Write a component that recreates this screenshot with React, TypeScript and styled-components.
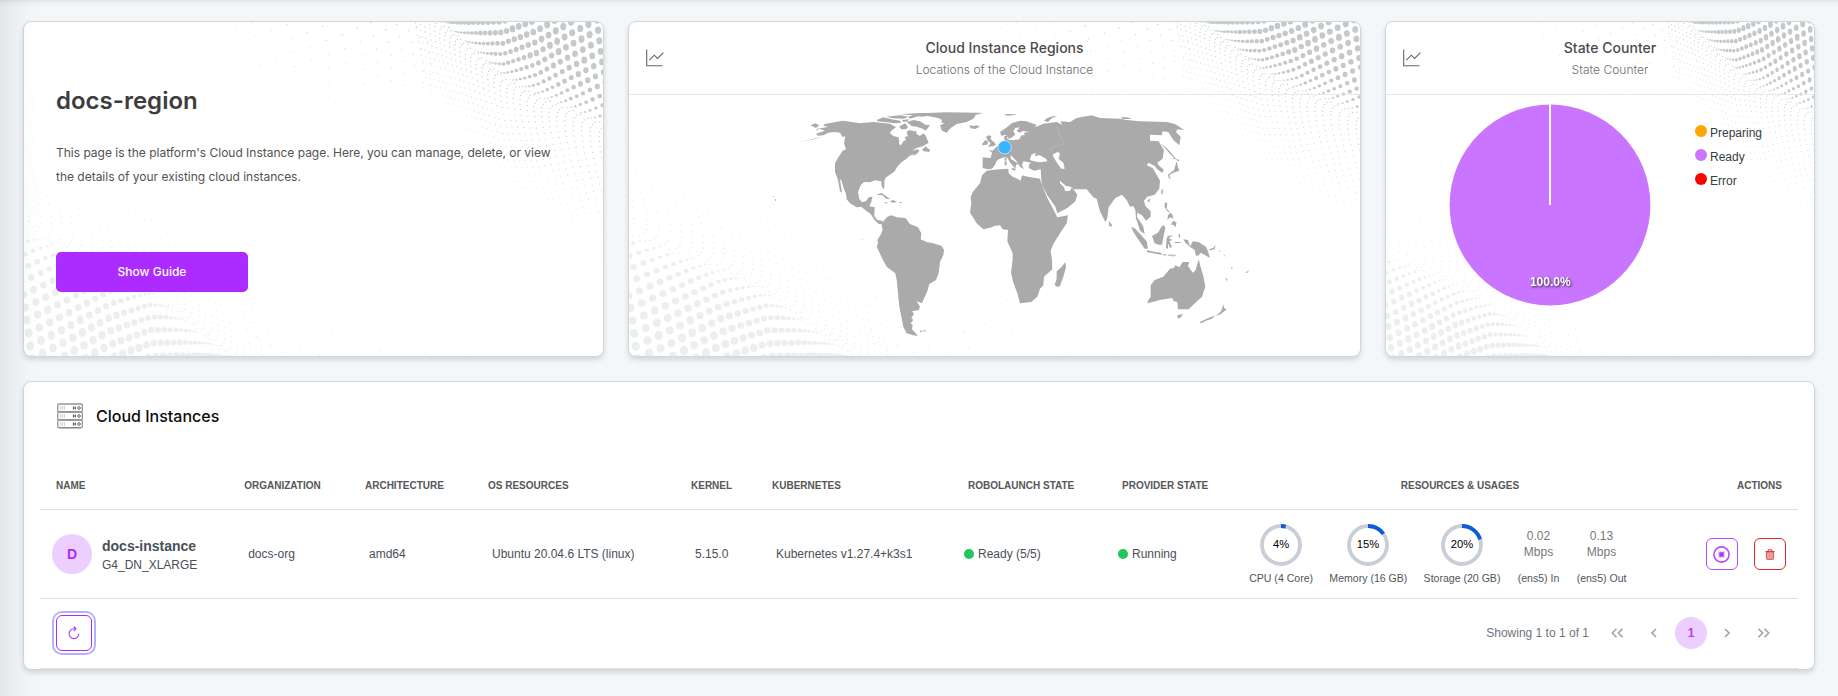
import React from "react";
import styled, { createGlobalStyle, css } from "styled-components";

const GlobalStyle = createGlobalStyle`
  * { box-sizing: border-box; }
  body { margin: 0; background: #f3f7fa; font-family: "Liberation Sans", Arial, sans-serif; }
`;

const inter = css`font-family: Inter, "Liberation Sans", sans-serif;`;
const ACCENT = "#ac2cff";

/* ---------- page shell ---------- */

const Page = styled.main`
  position: relative;
  width: 1838px;
  height: 696px;
  overflow: hidden;
  padding: 21px 23px 26px;
  display: flex;
  flex-direction: column;
  gap: 24px;
`;

const EdgeShade = styled.div`
  position: absolute;
  inset: 0;
  pointer-events: none;
  background:
    linear-gradient(to bottom, rgba(40, 50, 55, 0.1), rgba(40, 50, 55, 0.03) 3px, transparent 7px),
    linear-gradient(to right, rgba(40, 50, 55, 0.085), rgba(40, 50, 55, 0.045) 13px, rgba(40, 50, 55, 0.012) 27px, transparent 40px);
`;

const TopRow = styled.div`
  display: grid;
  grid-template-columns: 581px 733px 430px;
  gap: 24px;
  height: 336px;
`;

const Card = styled.section`
  position: relative;
  display: flex;
  flex-direction: column;
  background: #fff;
  border: 1px solid #d3d5d6;
  border-radius: 8px;
  box-shadow: 0 3px 5px rgba(0, 0, 0, 0.13);
`;

/* ---------- halftone wave backdrop ---------- */

const Backdrop = styled.svg`
  position: absolute;
  inset: 0;
  width: 100%;
  height: 100%;
  border-radius: 7px;
  pointer-events: none;
`;

const foldPoints: [number, number][] = [
  [-900, -1150], [-100, -350], [100, -130], [250, 0], [330, 69], [430, 160], [530, 219], [630, 259], [730, 304], [800, 335], [900, 375],
];

function foldY(x: number) {
  for (let i = 1; i < foldPoints.length; i++) {
    const [x0, y0] = foldPoints[i - 1];
    const [x1, y1] = foldPoints[i];
    if (x <= x1) return y0 + ((y1 - y0) * (x - x0)) / (x1 - x0);
  }
  return 375;
}

const WAVE_LEVELS = 8;

/* Dots are grouped in paths by opacity; units are a third of a pixel. */
function buildWave(): string[] {
  const paths: string[] = Array.from({ length: WAVE_LEVELS }, () => "");
  const dot = (px: number, y: number, rx: number, ry: number, a: number) => {
    if (y < -12 || y > 780 || px > 742 || a <= 0.04) return;
    const level = Math.min(WAVE_LEVELS - 1, Math.floor(a * WAVE_LEVELS));
    const r = `${rx.toFixed(1)} ${ry.toFixed(1)}`;
    const w = (2 * rx).toFixed(1);
    paths[level] += `M${(px - rx).toFixed(1)} ${y.toFixed(1)}a${r} 0 1 0 ${w} 0a${r} 0 1 0 -${w} 0`;
  };

  // crest and near slope, down to the point where the dots fade out
  for (let x = 800; x > 120; x -= x > 250 ? 15 + (13 * (x - 250)) / 480 : 15) {
    const shift = (0.9 * (x - 250)) / 31;
    for (let j = -60; j < 60; j++) {
      const m = j + shift;
      if (m > 18) continue;
      if (m > 0) {
        const g = 31 * m - 78 * (1 - Math.exp(-m / 3));
        const px = x + 65 * Math.exp(-m / 3) - 0.1 * g;
        const rx = 2.2 + 7.6 * (1 - Math.exp(-m / 4.6));
        dot(px, foldY(px) - g, rx, rx * (0.6 + 0.65 * (1 - Math.exp(-m / 4))), m < 1.5 ? 0.75 : 1);
      } else {
        const g = 18 * m + 52 * (1 - Math.exp(m / 4));
        const px = x + 65 - 5 * m - 70 * (1 - Math.exp(m / 3));
        const limit = 290 + (px - 250) * 0.3;
        dot(px, foldY(px) - g, 2.1, 1.9, 1.05 * (1 + g / limit));
      }
    }
  }

  // far slope: sparse specks spreading to the left
  let step = 18;
  let col = 0;
  for (let x = 190; x > -520; x -= step) {
    step = Math.min(52, step + 4.5);
    col += 1;
    for (let y = ((col * 17) % 40) - 20; y < 320; y += 24 + step * 0.35) {
      const drift = Math.sin(y / 60) * 8 + y * 0.12;
      const a = 0.95 * (1 - y / 330) * Math.min(1, 1 + (x + 100) / 430);
      dot(x + drift, y, 2, 2, a);
    }
  }
  return paths;
}

const wave = buildWave();

const Wave = ({ color }: { color: string }) => (
  <g fill={color}>
    {wave.map((d, i) => (
      <path key={i} d={d} opacity={(i + 1) / WAVE_LEVELS} />
    ))}
  </g>
);

interface WaveProps { w: number; top: [number, number]; bottom: [number, number] }

const WaveBackdrop = ({ w, top, bottom }: WaveProps) => (
  <Backdrop viewBox={`0 0 ${w} 334`}>
    <g transform={`translate(${w} 0) scale(${top[0] / 3} ${top[1] / 3}) translate(-730 0)`}>
      <Wave color="#c6c9c9" />
    </g>
    <g transform={`translate(0 334) scale(${-bottom[0] / 3} ${-bottom[1] / 3}) translate(-730 0)`}>
      <Wave color="#edefef" />
    </g>
  </Backdrop>
);

/* ---------- intro card ---------- */

const Intro = styled.div`
  ${inter}
  position: relative;
  padding: 63px 32px 0;
  display: flex;
  flex-direction: column;
  align-items: flex-start;
`;

const RegionName = styled.h1`
  margin: 0;
  font-size: 24px;
  line-height: 32px;
  font-weight: 600;
  color: #3d3d3d;
`;

const IntroText = styled.p`
  margin: 24px 0 63px;
  width: 500px;
  font-size: 12px;
  line-height: 24px;
  letter-spacing: -0.012px;
  color: #525252;
`;

const GuideButton = styled.button`
  ${inter}
  width: 192px;
  height: 40px;
  padding: 0 0 2px;
  border: 0;
  border-radius: 5px;
  background: ${ACCENT};
  color: #fff;
  font-size: 12px;
  font-weight: 500;
`;

/* ---------- chart cards ---------- */

const ChartHeader = styled.header`
  position: relative;
  display: flex;
  align-items: center;
  height: 73px;
  padding: 0 15px 0 17px;
  border-bottom: 1px solid #e7e8e9;
`;

const ChartTitles = styled.div`
  ${inter}
  flex: 1;
  text-align: center;
  padding-top: 1px;
`;

const ChartTitle = styled.div`
  font-size: 14px;
  line-height: 22px;
  font-weight: 500;
  letter-spacing: 0.02px;
  color: #4b4b4b;
`;

const ChartSubtitle = styled.div`
  font-size: 12px;
  line-height: 21px;
  font-weight: 300;
  letter-spacing: 0.03px;
  color: #6c6c6c;
`;

const ChartBody = styled.div`
  position: relative;
  flex: 1;
  display: flex;
`;

const ChartIcon = () => (
  <svg width="18" height="18" viewBox="0 0 18 18" fill="none" stroke="#666" strokeWidth="1.1">
    <path d="M0.7 0.5V16.7H16.5" />
    <path d="M3.3 11.2L8.3 6.2L11.6 9.4L17.4 3.7" />
  </svg>
);

const MapSvg = styled.svg`
  width: 100%;
  height: 100%;
`;

const westLand = [
  "M168 101L195 92 178 86 168 92 172 86 186 84 205 80 190 77 194 72 215 68 248 62 275 66 300 70 340 66 390 71 408 82 392 94 390 100 400 108 415 112 418 122 417 133 423 136 430 124 438 120 434 112 443 108 440 96 448 90 462 94 468 92 470 102 480 108 490 100 496 106 500 114 506 128 490 138 470 144 456 152 474 148 478 153 470 162 458 168 462 162 448 168 440 176 425 186 412 200 404 214 390 224 378 232 373 242 373 262 370 268 365 258 364 244 345 241 330 247 312 246 302 256 294 276 298 298 306 306 318 304 326 292 338 290 335 300 334 306 328 319 344 322 343 348 352 360 366 362 368 366 382 350 395 346 410 352 436 354 450 372 474 382 484 400 482 418 500 426 520 430 545 438 552 450 550 466 540 486 536 520 528 540 508 552 502 574 490 600 486 610 470 604 480 620 476 630 456 634 462 642 454 654 460 660 452 670 458 676 456 688 474 708 460 706 440 700 430 680 424 650 418 620 414 580 410 540 406 520 380 500 366 474 350 440 354 430 352 420 362 404 368 390 364 372 356 372 344 360 332 342 318 332 304 320 290 322 270 310 260 298 258 282 250 262 244 240 240 238 246 278 240 274 234 240 225 216 225 190 236 170 248 152 258 148 252 130 256 108 248 112 240 98 224 96 205 98 190 106 174 107Z",
  "M440 66L460 60 480 64 496 74 510 76 504 84 496 92 488 86 470 80 455 78Z",
  "M350 60L370 52 395 58 420 62 424 68 405 70 380 67 352 64Z",
  "M424 76L436 70 444 82 438 88 424 88 418 80Z",
  "M378 50L420 46 445 50 430 56 400 55Z",
  "M420 43L480 39 545 40 510 45 490 50 474 49 450 56 444 50 460 46Z",
  "M426 60L446 58 444 64 430 66Z",
  "M480 40L560 37 648 38 670 39 648 44 640 56 620 66 590 72 572 84 560 98 546 92 540 76 554 70 544 68 546 60 535 54 515 50 490 46Z",
  "M628 76L640 78 650 76 660 80 645 87 632 85Z",
  "M486 150L498 138 504 146 510 148 508 156 492 154Z",
  "M152 76L166 70 178 76 168 84Z",
  "M122 126L155 118 193 109 165 117 140 122Z",
  "M348 284L365 279 378 288 391 298 378 296 368 286Z",
  "M390 304L400 300 412 306 396 308Z",
  "M419 306h6v3h-6Z", "M374 307h8v3h-8Z",
  "M480 692h6v4h-6Z", "M489 691h8v3h-8Z", "M44 296L50 300 46 303Z", "M39 289h3v2h-3Z",
  "M306 417h2v2h-2Z",
];

const eastLand = [
  "M68 172L92 174 96 158 86 150 98 152 108 142 120 132 134 122 132 110 140 106 142 116 148 120 160 121 178 118 184 106 194 106 192 98 208 96 190 93 178 98 170 92 180 82 166 84 160 94 166 104 154 113 146 116 138 104 124 107 120 96 138 84 155 70 180 62 200 64 215 70 230 74 224 82 240 76 250 71 290 66 306 74 302 64 330 66 350 54 395 46 420 54 480 56 500 60 540 64 620 66 645 72 660 82 672 90 652 88 648 96 662 110 658 136 640 120 625 96 608 94 605 106 570 104 570 122 596 124 602 134 612 150 608 176 592 188 596 196 612 210 606 218 592 208 584 198 566 188 560 196 578 204 590 224 600 242 598 266 584 284 562 290 552 302 556 318 572 334 572 350 558 362 546 346 532 338 531 352 544 370 550 380 554 402 540 392 532 366 528 356 526 330 520 318 510 320 500 300 486 284 466 294 446 322 442 354 436 366 420 334 410 296 400 292 394 284 380 268 340 268 332 260 318 258 300 242 300 250 312 262 316 274 330 272 336 262 352 284 346 304 322 324 292 340 286 320 262 286 246 256 244 238 242 208 222 212 206 204 208 192 214 188 190 184 186 196 192 208 180 200 170 184 152 165 152 176 176 192 168 194 166 206 152 190 142 173 130 172 112 180 104 196 96 206 84 208 68 204ZM210 180L214 164 228 158 224 168 240 166 258 176 262 184 240 187 222 184ZM278 164L292 156 300 160 296 176 310 188 314 206 304 206 292 190 282 174Z",
  "M80 212L96 210 120 208 145 206 146 220 158 230 172 236 182 242 186 226 204 230 240 236 246 256 262 294 280 328 292 352 324 346 320 370 300 400 280 432 272 452 276 480 277 508 252 530 250 556 240 566 232 590 214 606 180 610 172 580 160 548 153 518 158 480 158 460 142 424 144 390 128 388 120 376 102 378 96 382 70 388 50 370 38 350 30 338 34 310 32 290 40 274 60 250 66 226Z",
  "M316 486L318 502 310 530 300 558 292 561 284 554 290 536 290 514 304 502Z",
  "M84 106L94 108 92 117 104 128 108 134 100 139 84 140 92 130 84 122 78 112Z",
  "M66 132L76 120 84 124 82 134 68 136Z",
  "M132 42L172 43 160 46 142 47Z",
  "M252 62L262 54 278 49 292 49 276 54 264 66Z",
  "M134 174h5v8h-5Z", "M134 184h6v12h-6Z", "M156 204L168 206 164 212 154 208Z",
  "M482 52h20l14 5h-28Z",
  "M660 180L654 184 648 178 638 176 640 172 650 178ZM650 184L654 200 658 212 646 216 632 222 628 228 632 236 626 234 624 224 642 210Z",
  "M600 128L622 146 634 160 650 178 632 164 618 148Z",
  "M604 270L609 268 608 284 604 280Z",
  "M562 300L572 296 566 308Z",
  "M614 308L622 308 620 326 632 338 622 334 614 322Z",
  "M624 346L632 338 638 346 640 356 630 352 622 360Z",
  "M632 374L640 362 650 368 646 382 640 374Z",
  "M446 362L456 374 454 380 448 378Z",
  "M514 380L526 386 546 408 560 424 564 446 554 446 536 420 520 396Z",
  "M560 450L584 456 604 458 604 464 580 460 562 457Z",
  "M608 463h12v3h-12Z", "M624 464h20v3h-20Z", "M632 470L650 464 646 468Z",
  "M576 408L594 398 606 378 612 376 616 384 612 402 606 434 596 434 584 430Z",
  "M620 414L624 408 640 406 626 414 636 420 628 424 636 440 630 444 624 430 624 446 618 444Z",
  "M656 402L660 402 660 414 656 412Z", "M644 426h18v3h-18Z",
  "M670 418L684 420 688 434 692 438 698 424 715 426 738 440 744 454 750 474 736 466 722 458 716 466 708 468 704 450 690 440 676 428Z",
  "M746 448L760 444 767 434 764 448 750 451Z",
  "M774 448L784 456 778 454Z", "M788 460L802 474 792 466Z", "M814 500h3v6h-3Z", "M796 532L803 540 799 542Z", "M855 519L868 510 862 518Z",
  "M716 478L722 502 730 528 736 560 726 590 700 614 686 628 654 628 652 606 642 604 636 594 600 600 562 610 564 602 572 590 572 556 584 540 610 530 630 506 642 504 646 496 658 502 668 486 688 486 684 498 698 518 706 512Z",
  "M652 646L670 642 662 652 654 656Z",
  "M790 612L792 624 800 628 790 636 778 644 768 648 784 632Z",
  "M766 646L756 656 738 662 724 670 718 667 740 656Z",
];

const WorldMap = () => (
  <MapSvg viewBox="0 0 731 261">
    <g fill="#aaaaaa" fillRule="evenodd" transform="translate(131 5) scale(0.33333)">
      {westLand.map((d) => <path key={d} d={d} />)}
      <g transform="translate(600 0)">
        {eastLand.map((d) => <path key={d} d={d} />)}
        <path d="M290 76L300 104 311 132 292 138 272 146 274 156" fill="none" stroke="#c2c2c2" strokeWidth="1.5" />
        <circle cx="134" cy="142" r="20" fill="#38b6ff" stroke="#c8e6f7" strokeWidth="2.5" />
      </g>
    </g>
  </MapSvg>
);

const PieSvg = styled.svg`
  margin: 9px 0 0 63px;
  flex: none;
`;

const PieLabel = styled.text`
  font: bold 12px "Liberation Sans", Arial, sans-serif;
  fill: #fff;
  text-anchor: middle;
  filter: drop-shadow(1px 1px 1px rgba(0, 0, 0, 0.7));
`;

const Pie = () => (
  <PieSvg width="202" height="202" viewBox="0 0 202 202">
    <circle cx="101" cy="101" r="100.4" fill="#c975ff" />
    <path d="M101 0V101" stroke="#fff" strokeWidth="2" />
    <PieLabel x="101.3" y="182">100.0%</PieLabel>
  </PieSvg>
);

const Legend = styled.ul`
  list-style: none;
  margin: 24px 0 0 44px;
  padding: 0;
  color: #373d3f;
  font-size: 12px;
`;

const LegendItem = styled.li<{ $color: string }>`
  display: flex;
  align-items: center;
  gap: 3px;
  height: 24px;
  line-height: 20px;
  padding-top: 4px;
  &::before {
    content: "";
    width: 12px;
    height: 12px;
    margin-top: -4px;
    border-radius: 50%;
    background: ${(p) => p.$color};
  }
`;

/* ---------- instances table ---------- */

const TableCard = styled(Card)`
  height: 289px;
  padding: 0 16px;
`;

const TableTitle = styled.div`
  ${inter}
  display: flex;
  align-items: center;
  gap: 13px;
  height: 69px;
  padding-left: 17px;
  font-size: 16px;
  font-weight: 500;
  line-height: 20px;
  color: #0d0d0d;
`;

const TitleText = styled.span`padding-bottom: 2px;`;

const ServerIcon = () => (
  <svg width="26" height="27" viewBox="0 0 26 27" fill="none">
    {[0, 8, 16].map((y) => (
      <g key={y} transform={`translate(0 ${y})`}>
        <rect x="0.7" y="1" width="24.6" height="7.6" rx="1" stroke="#959595" strokeWidth="1.3" />
        <path d="M2 8.9H24" stroke="#808080" strokeWidth="0.9" />
        <path d="M3.3 3V7M5.3 3V7M7.3 3V7" stroke="#c6c6c6" strokeWidth="0.9" />
        <path d="M16.4 3.6V6.4M18.4 3.6V6.4M16 5H19" stroke="#666" strokeWidth="1.1" />
        <circle cx="22" cy="5" r="1.3" stroke="#666" strokeWidth="1" />
      </g>
    ))}
  </svg>
);

const GridRow = styled.div`
  display: grid;
  grid-template-columns: 188.2px 120.8px 123px 203px 81px 196px 154px 118px 472px 102px;
  align-items: center;
  border-bottom: 1px solid #dcdfe3;
`;

const HeadRow = styled(GridRow)`
  height: 59px;
  padding-top: 12px;
`;

const HeadCell = styled.div<{ $align?: string }>`
  padding: 0 16px;
  font-size: 10px;
  font-weight: bold;
  line-height: 16px;
  color: #575757;
  white-space: nowrap;
  text-align: ${(p) => p.$align ?? "left"};
`;

const BodyRow = styled(GridRow)`height: 89px;`;

const Cell = styled.div`
  padding-left: 20px;
  font-size: 12px;
  color: #495057;
  white-space: nowrap;
`;

const NameCell = styled.div`
  display: flex;
  align-items: center;
  gap: 10px;
  padding-left: 12px;
  color: #495057;
`;

const Avatar = styled.div`
  width: 40px;
  height: 40px;
  border-radius: 50%;
  display: grid;
  place-items: center;
  background: #eccfff;
  color: ${ACCENT};
  font-size: 14px;
  font-weight: bold;
`;

const InstanceName = styled.div`
  padding-top: 4px;
  font-size: 14px;
  font-weight: bold;
  line-height: 18px;
`;

const InstanceType = styled.div`
  font-size: 12px;
  line-height: 21px;
`;

const StateCell = styled.div`
  display: flex;
  align-items: center;
  gap: 4px;
  padding-left: 12px;
  font-size: 12px;
  color: #495057;
  &::before {
    content: "";
    width: 10px;
    height: 10px;
    border-radius: 50%;
    background: #22c55e;
  }
`;

const Usages = styled.div`
  display: flex;
  gap: 16.3px;
  padding-left: 25.2px;
`;

const Usage = styled.div`
  display: flex;
  flex-direction: column;
  align-items: center;
  gap: 6px;
  color: #4f555b;
  font-size: 10.56px;
  line-height: 13px;
  white-space: nowrap;
`;

const RateUsage = styled(Usage)`
  padding-left: 1px;
`;

const Rate = styled.div`
  height: 42px;
  width: 40px;
  padding-top: 4px;
  text-align: center;
  white-space: normal;
  font-size: 12px;
  line-height: 16px;
  color: #777;
`;

const GaugeText = styled.text`
  font: 11.2px "Liberation Sans", Arial, sans-serif;
  fill: #000;
  text-anchor: middle;
`;

const Gauge = ({ value }: { value: number }) => {
  const c = 2 * Math.PI * 19;
  return (
    <svg width="42" height="42" viewBox="0 0 42 42" fill="none">
      <circle cx="21" cy="21" r="19" stroke="#c9ced6" strokeWidth="3.8" />
      <circle cx="21" cy="21" r="19" stroke="#0b5cdb" strokeWidth="3.8" strokeDasharray={`${(c * value) / 100} ${c}`} transform="rotate(-90 21 21)" />
      <GaugeText x="21" y="24.4">{value}%</GaugeText>
    </svg>
  );
};

const Actions = styled.div`
  display: flex;
  gap: 16px;
  padding-left: 10px;
`;

const IconButton = styled.button<{ $color: string }>`
  width: 32px;
  height: 32px;
  padding: 0;
  display: grid;
  place-items: center;
  background: #fff;
  border: 1px solid ${(p) => p.$color};
  border-radius: 6px;
`;

const RefreshButton = styled(IconButton)`
  width: 36px;
  height: 36px;
  box-shadow: 0 0 0 2px #fff, 0 0 0 4px #b0b2fb;
`;

const Footer = styled.div`
  display: flex;
  align-items: center;
  justify-content: space-between;
  height: 70px;
  padding: 0 18px 2px 16px;
  border-bottom: 1px solid #e3e5e8;
`;

const Pager = styled.nav`
  display: flex;
  align-items: center;
  font-size: 12px;
  color: #6c757d;
`;

const PageStep = styled.span<{ $w: number }>`
  display: grid;
  place-items: center;
  width: ${(p) => p.$w}px;
`;

const PageNumber = styled.span`
  width: 32px;
  height: 32px;
  margin-left: 12px;
  border-radius: 50%;
  display: grid;
  place-items: center;
  background: #eccfff;
  color: #b23cff;
  font-weight: bold;
`;

const Chevron = ({ paths, w = 6 }: { paths: string; w?: number }) => (
  <svg width={w} height="10" viewBox={`0 0 ${w} 10`} fill="none" stroke="#9fa5ab" strokeWidth="1.6">
    <path d={paths} />
  </svg>
);

const usages = [
  { label: "CPU (4 Core)", value: 4 },
  { label: "Memory (16 GB)", value: 15 },
  { label: "Storage (20 GB)", value: 20 },
];

const rates = [
  { label: "(ens5) In", value: "0.02 Mbps" },
  { label: "(ens5) Out", value: "0.13 Mbps" },
];

const heads = ["NAME", "ORGANIZATION", "ARCHITECTURE", "OS RESOURCES", "KERNEL", "KUBERNETES", "ROBOLAUNCH STATE", "PROVIDER STATE"];

const InstancesTable = () => (
  <TableCard>
    <TableTitle><ServerIcon /><TitleText>Cloud Instances</TitleText></TableTitle>
    <HeadRow>
      {heads.map((h) => <HeadCell key={h}>{h}</HeadCell>)}
      <HeadCell $align="center">RESOURCES &amp; USAGES</HeadCell>
      <HeadCell $align="right">ACTIONS</HeadCell>
    </HeadRow>
    <BodyRow>
      <NameCell>
        <Avatar>D</Avatar>
        <div>
          <InstanceName>docs-instance</InstanceName>
          <InstanceType>G4_DN_XLARGE</InstanceType>
        </div>
      </NameCell>
      <Cell>docs-org</Cell>
      <Cell>amd64</Cell>
      <Cell>Ubuntu 20.04.6 LTS (linux)</Cell>
      <Cell>5.15.0</Cell>
      <Cell>Kubernetes v1.27.4+k3s1</Cell>
      <StateCell>Ready (5/5)</StateCell>
      <StateCell>Running</StateCell>
      <Usages>
        {usages.map((u) => <Usage key={u.label}><Gauge value={u.value} />{u.label}</Usage>)}
        {rates.map((r) => <RateUsage key={r.label}><Rate>{r.value}</Rate>{r.label}</RateUsage>)}
      </Usages>
      <Actions>
        <IconButton $color="#b84dff">
          <svg width="17" height="17" viewBox="0 0 17 17">
            <circle cx="8.5" cy="8.5" r="7.6" fill="none" stroke="#b84dff" strokeWidth="1.6" />
            <rect x="5.5" y="5.5" width="6" height="6" fill="#d79bff" />
            <rect x="6.4" y="6.4" width="4.2" height="4.2" fill="#b030ff" />
          </svg>
        </IconButton>
        <IconButton $color="#dc2626">
          <svg width="10" height="11" viewBox="0 0 10 11" fill="none" stroke="#d43c3c">
            <path d="M1.5 2.7H8.5V9.6Q8.5 10.4 7.7 10.4H2.3Q1.5 10.4 1.5 9.6Z" fill="#ef9a9a" strokeWidth="0.8" />
            <path d="M0.3 2.6H9.7M3.2 2.4V0.8H6.8V2.4" strokeWidth="1" />
          </svg>
        </IconButton>
      </Actions>
    </BodyRow>
    <Footer>
      <RefreshButton $color={ACCENT}>
        <svg width="12" height="14" viewBox="0 0 12 14" fill="none" stroke="#a93bf0" strokeWidth="1.1">
          <path d="M7.4 2.8H6A4.9 4.9 0 1 0 10.9 7.8" />
          <path d="M5.7 0.5L8 2.8L5.7 5.1" />
        </svg>
      </RefreshButton>
      <Pager>
        <span>Showing 1 to 1 of 1</span>
        <PageStep $w={56}><Chevron w={12} paths="M5.5 0.8L1.3 5L5.5 9.2M11.5 0.8L7.3 5L11.5 9.2" /></PageStep>
        <PageStep $w={18}><Chevron paths="M5 1L1 5L5 9" /></PageStep>
        <PageNumber>1</PageNumber>
        <PageStep $w={40}><Chevron paths="M1 1L5 5L1 9" /></PageStep>
        <PageStep $w={33}><Chevron w={12} paths="M0.5 0.8L4.7 5L0.5 9.2M6.5 0.8L10.7 5L6.5 9.2" /></PageStep>
      </Pager>
    </Footer>
  </TableCard>
);

export default function App() {
  return (
    <>
      <GlobalStyle />
      <Page>
        <TopRow>
          <Card>
            <WaveBackdrop w={579} top={[1, 1]} bottom={[1.27, 1.22]} />
            <Intro>
              <RegionName>docs-region</RegionName>
              <IntroText>
                This page is the platform's Cloud Instance page. Here, you can manage, delete, or view the details of your existing cloud instances.
              </IntroText>
              <GuideButton>Show Guide</GuideButton>
            </Intro>
          </Card>
          <Card>
            <WaveBackdrop w={731} top={[0.98, 0.9]} bottom={[1.38, 1.2]} />
            <ChartHeader>
              <ChartIcon />
              <ChartTitles>
                <ChartTitle>Cloud Instance Regions</ChartTitle>
                <ChartSubtitle>Locations of the Cloud Instance</ChartSubtitle>
              </ChartTitles>
            </ChartHeader>
            <ChartBody><WorldMap /></ChartBody>
          </Card>
          <Card>
            <WaveBackdrop w={428} top={[0.78, 0.9]} bottom={[1.04, 1]} />
            <ChartHeader>
              <ChartIcon />
              <ChartTitles>
                <ChartTitle>State Counter</ChartTitle>
                <ChartSubtitle>State Counter</ChartSubtitle>
              </ChartTitles>
            </ChartHeader>
            <ChartBody>
              <Pie />
              <Legend>
                <LegendItem $color="#ffa500">Preparing</LegendItem>
                <LegendItem $color="#c975ff">Ready</LegendItem>
                <LegendItem $color="#ff0000">Error</LegendItem>
              </Legend>
            </ChartBody>
          </Card>
        </TopRow>
        <InstancesTable />
        <EdgeShade />
      </Page>
    </>
  );
}
